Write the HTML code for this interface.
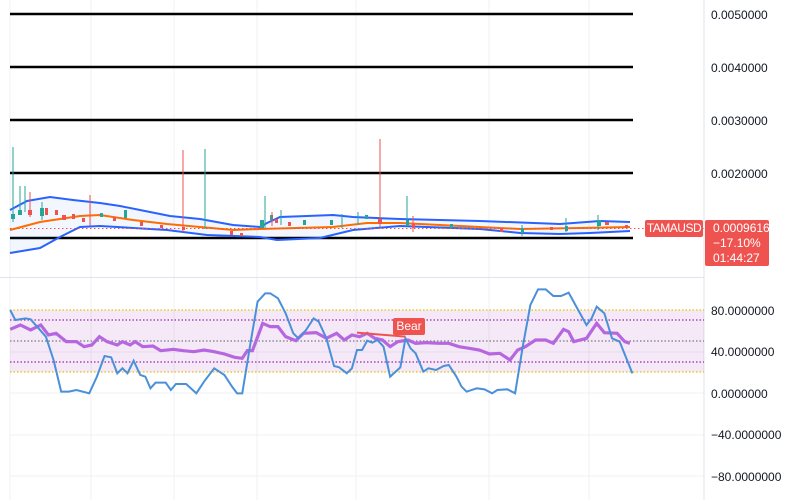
<!DOCTYPE html>
<html><head><meta charset="utf-8"><style>
body{margin:0;width:802px;height:500px;overflow:hidden;background:#fff;font-family:"Liberation Sans",sans-serif}
.ax{position:absolute;left:711px;font-size:12px;color:#131722}
.lb{position:absolute;color:#fff;background:#ef5350;font-size:12px;border-radius:2px}
</style></head><body>
<svg width="802" height="500" style="position:absolute;left:0;top:0">
<g stroke="#eef0f3" stroke-width="1">
<line x1="10" y1="0" x2="10" y2="500"/><line x1="91" y1="0" x2="91" y2="500"/><line x1="174" y1="0" x2="174" y2="500"/><line x1="257" y1="0" x2="257" y2="500"/><line x1="356" y1="0" x2="356" y2="500"/><line x1="489" y1="0" x2="489" y2="500"/><line x1="589" y1="0" x2="589" y2="500"/>
<line x1="10" y1="393" x2="704" y2="393"/><line x1="10" y1="435" x2="704" y2="435"/><line x1="10" y1="476" x2="704" y2="476"/><line x1="10" y1="352" x2="704" y2="352"/>
</g>
<line x1="704" y1="0" x2="704" y2="500" stroke="#e0e3eb"/>
<line x1="0" y1="277.5" x2="704" y2="277.5" stroke="#e0e3eb"/>
<g stroke="#000" stroke-width="2.5"><line x1="10" y1="14" x2="633" y2="14"/><line x1="10" y1="67" x2="633" y2="67"/><line x1="10" y1="120" x2="633" y2="120"/><line x1="10" y1="173" x2="633" y2="173"/><line x1="10" y1="238" x2="633" y2="238"/></g>
<path d="M10,210 L27,201 L50,197 L73,200 L100,203 L120,206 L150,212 L170,216 L200,219 L233,225 L260,227 L267,223 L280,217 L307,216 L333,215 L353,217 L400,219 L480,221 L560,224 L600,221 L630,222 L630,231 L590,233 L560,234 L520,233 L480,229 L400,226 L353,230 L320,238 L277,240 L260,237 L207,235 L167,230 L100,226 L80,227 L60,237 L40,248 L10,253 Z" fill="#2962ff" fill-opacity="0.06"/>
<polyline fill="none" stroke="#2962ff" stroke-width="2" points="10,210 27,201 50,197 73,200 100,203 120,206 150,212 170,216 200,219 233,225 260,227 267,223 280,217 307,216 333,215 353,217 400,219 480,221 560,224 600,221 630,222"/>
<polyline fill="none" stroke="#2962ff" stroke-width="2" points="10,253 40,248 60,237 80,227 100,226 167,230 207,235 260,237 277,240 320,238 353,230 400,226 480,229 520,233 560,234 590,233 630,231"/>
<polyline fill="none" stroke="#ff6d00" stroke-width="2" points="10,230 40,222 80,216 100,215 133,220 167,224 233,230 260,229 333,227 367,223 400,223 460,226 520,229 580,228 630,227"/>
<line x1="10" y1="228.5" x2="704" y2="228.5" stroke="#ef5350" stroke-dasharray="1.5,2.5"/>
<g stroke="#26a69a" stroke-width="1">
<line x1="13" y1="147" x2="13" y2="222"/><line x1="20" y1="186" x2="20" y2="215"/><line x1="25" y1="186" x2="25" y2="212"/><line x1="42" y1="202" x2="42" y2="220"/><line x1="205" y1="149" x2="205" y2="229"/><line x1="265" y1="196" x2="265" y2="228"/><line x1="281" y1="210" x2="281" y2="225"/><line x1="342" y1="214" x2="342" y2="228"/><line x1="358" y1="212" x2="358" y2="225"/><line x1="407" y1="196" x2="407" y2="225"/><line x1="522" y1="225" x2="522" y2="236"/><line x1="566" y1="218" x2="566" y2="232"/><line x1="598" y1="215" x2="598" y2="230"/>
</g>
<g fill="#26a69a"><rect x="11" y="214" width="4" height="5"/><rect x="18" y="210" width="4" height="5"/><rect x="40" y="208" width="4" height="8"/><rect x="100" y="213" width="3" height="4"/><rect x="124" y="210" width="3" height="8"/><rect x="260" y="220" width="4" height="8"/><rect x="270" y="215" width="3" height="5"/><rect x="303" y="220" width="3" height="5"/><rect x="330" y="220" width="3" height="5"/><rect x="365" y="215" width="3" height="4"/><rect x="406" y="220" width="3" height="6"/><rect x="450" y="224" width="3" height="4"/><rect x="521" y="228" width="3" height="5"/><rect x="565" y="226" width="3" height="5"/><rect x="597" y="220" width="4" height="6"/></g>
<g stroke="#ef5350" stroke-width="1"><line x1="30" y1="192" x2="30" y2="217"/><line x1="183" y1="150" x2="183" y2="232"/><line x1="90" y1="195" x2="90" y2="226"/><line x1="272" y1="212" x2="272" y2="226"/><line x1="380" y1="139" x2="380" y2="228"/><line x1="413" y1="216" x2="413" y2="232"/></g>
<g fill="#ef5350"><rect x="28" y="210" width="4" height="5"/><rect x="45" y="208" width="3" height="7"/><rect x="55" y="210" width="3" height="5"/><rect x="62" y="215" width="4" height="5"/><rect x="72" y="214" width="3" height="5"/><rect x="82" y="218" width="3" height="4"/><rect x="113" y="217" width="3" height="4"/><rect x="140" y="222" width="3" height="4"/><rect x="160" y="225" width="3" height="3"/><rect x="182" y="227" width="3" height="3"/><rect x="230" y="231" width="3" height="4"/><rect x="240" y="233" width="3" height="3"/><rect x="275" y="219" width="3" height="4"/><rect x="288" y="222" width="3" height="4"/><rect x="378" y="219" width="4" height="5"/><rect x="412" y="224" width="3" height="4"/><rect x="500" y="228" width="3" height="4"/><rect x="550" y="227" width="3" height="3"/><rect x="605" y="222" width="4" height="3"/><rect x="625" y="225" width="3" height="3"/></g>
<rect x="10" y="310" width="694" height="62" fill="#9c27b0" fill-opacity="0.1"/>
<g stroke-dasharray="1.5,2" stroke-width="1.2"><line x1="10" y1="310" x2="704" y2="310" stroke="#e6c200"/><line x1="10" y1="372" x2="704" y2="372" stroke="#e6c200"/><line x1="10" y1="320" x2="704" y2="320" stroke="#9c27b0"/><line x1="10" y1="362" x2="704" y2="362" stroke="#9c27b0"/><line x1="10" y1="341" x2="704" y2="341" stroke="#787b86"/></g>
<g transform="translate(0,280) scale(0.51,0.3333)">
<polyline fill="none" stroke="#b667e0" stroke-width="3.2" vector-effect="non-scaling-stroke" points="20,148 40,135 60,150 80,135 95,165 110,160 130,185 150,185 165,200 180,195 195,170 210,185 230,195 240,185 255,195 265,185 280,200 300,198 315,212 340,208 360,212 380,215 400,210 420,215 440,222 460,232 475,235 485,212 495,212 515,130 530,140 545,140 560,170 580,182 595,160 620,158 640,175 660,160 675,180 690,165 705,170 720,160 735,175 750,180 765,200 780,185 800,180 815,190 835,188 860,190 880,190 900,200 920,205 940,210 960,222 980,220 1000,240 1015,210 1030,200 1050,180 1070,180 1085,190 1105,148 1115,155 1125,185 1150,175 1170,130 1185,158 1210,160 1225,185 1235,190"/>
<polyline fill="none" stroke="#4a90d9" stroke-width="2" vector-effect="non-scaling-stroke" points="20,90 30,120 50,115 60,118 90,170 105,240 120,335 135,335 150,330 175,340 190,290 205,228 218,232 230,280 240,265 250,280 262,242 275,285 285,290 295,325 305,308 325,308 335,330 345,312 365,312 385,340 400,305 420,265 440,285 455,320 465,340 475,340 490,200 505,65 520,40 530,40 545,55 560,100 575,160 585,175 600,150 615,115 625,125 640,175 655,258 665,262 680,280 690,265 700,210 710,210 720,182 730,188 740,180 752,200 765,290 785,262 795,175 805,205 815,220 830,275 840,265 855,270 870,258 880,255 895,290 905,320 915,335 935,325 950,328 965,340 975,330 995,328 1010,340 1025,200 1040,75 1055,28 1070,28 1085,48 1100,48 1115,38 1130,80 1150,135 1160,115 1170,80 1185,100 1200,175 1215,185 1240,280"/>
<polyline fill="none" stroke="#ef5350" stroke-width="2" vector-effect="non-scaling-stroke" points="700,158 795,170"/>
</g>
</svg>
<div class="lb" style="left:393px;top:318px;width:32px;height:17px;line-height:17px;text-align:center">Bear</div>
<div class="ax" style="top:8px">0.0050000</div>
<div class="ax" style="top:61px">0.0040000</div>
<div class="ax" style="top:114px">0.0030000</div>
<div class="ax" style="top:167px">0.0020000</div>
<div class="lb" style="left:645px;top:220px;width:58px;height:17px;line-height:17px;text-align:center;letter-spacing:-0.5px">TAMAUSD</div>
<div class="lb" style="left:705px;top:220px;width:64px;height:46px;padding-left:8px;box-sizing:border-box;line-height:15px;padding-top:1px">0.0009616<br>−17.10%<br>01:44:27</div>
<div class="ax" style="top:304px">80.0000000</div>
<div class="ax" style="top:345px">40.0000000</div>
<div class="ax" style="top:387px">0.0000000</div>
<div class="ax" style="top:428px">−40.0000000</div>
<div class="ax" style="top:470px">−80.0000000</div>
</body></html>
